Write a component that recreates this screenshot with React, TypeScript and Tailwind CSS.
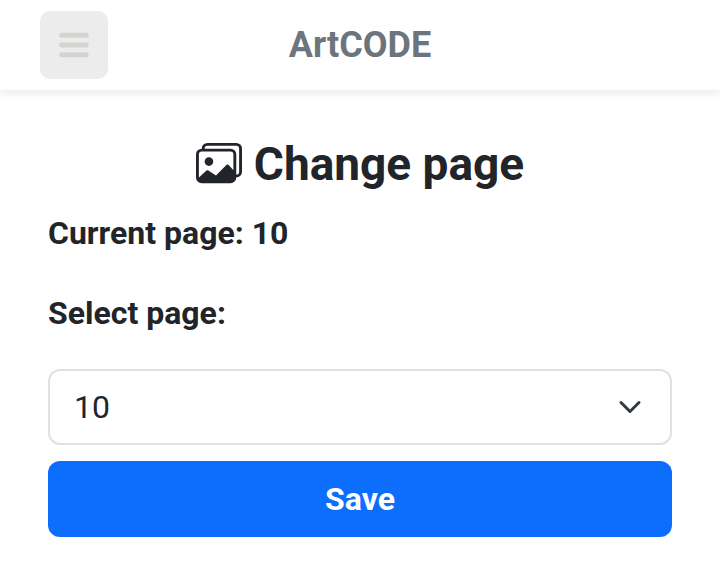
import { BsImages } from "react-icons/bs";

export default function App() {
  return (
    <div className="min-h-[574px] bg-white font-['Roboto',sans-serif] text-[#212529] antialiased">
      <header className="grid h-[90px] grid-cols-[1fr_auto_1fr] items-center px-10 shadow-[0_4px_8px_rgba(0,0,0,0.075)]">
        <button className="flex size-[68px] items-center justify-center rounded-[10px] bg-[#ececec]" aria-label="Menu">
          <svg width="32" height="28" viewBox="0 0 32 28" fill="none" stroke="#d3d3cf" strokeWidth="5" strokeLinecap="round">
            <path d="M3.8 4.2h24.4M3.8 14h24.4M3.8 23.8h24.4" />
          </svg>
        </button>
        <div className="text-[36px] font-bold leading-[44px] text-[#6c757d]">ArtCODE</div>
      </header>
      <main className="px-12 pt-[46px]">
        <h1 className="flex items-center justify-center gap-3 text-[46px] font-bold leading-[56px]">
          <BsImages className="mb-0.5 size-[46px]" />
          <span>Change page</span>
        </h1>
        <p className="mt-[17px] text-[32px] font-bold leading-[48px]">Current page: 10</p>
        <p className="mt-8 text-[32px] font-bold leading-[48px]">Select page:</p>
        <div className="mt-8 flex h-[76px] items-center justify-between rounded-[12px] border-2 border-[#dee2e6] px-6 pr-7 text-[32px]">
          <span>10</span>
          <svg width="24" height="24" viewBox="0 0 16 16" fill="none" stroke="#343a40" strokeWidth="2" strokeLinecap="round" strokeLinejoin="round">
            <path d="m2 5 6 6 6-6" />
          </svg>
        </div>
        <button className="mt-4 h-[76px] w-full rounded-[12px] bg-[#0d6efd] text-[32px] font-bold text-white">Save</button>
      </main>
    </div>
  );
}
